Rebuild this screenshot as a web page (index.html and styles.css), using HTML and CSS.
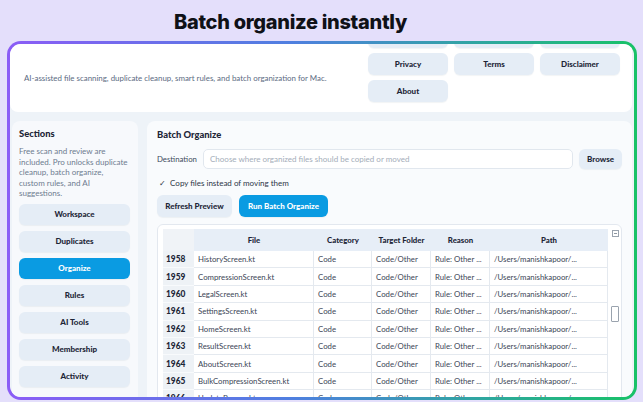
FILE: index.html
```html
<!DOCTYPE html>
<html lang="en">
<head>
    <meta charset="UTF-8">
    <meta name="viewport" content="width=device-width, initial-scale=1.0">
    <title>Batch organize instantly</title>
    <link rel="stylesheet" href="styles.css">
</head>
<body>
    <h1 class="headline">Batch organize instantly</h1>

    <div class="frame">
        <header class="app-header">
            <p class="tagline">AI-assisted file scanning, duplicate cleanup, smart rules, and batch organization for Mac.</p>
            <nav class="links">
                <button class="soft-btn">Settings</button>
                <button class="soft-btn">Support</button>
                <button class="soft-btn">Rate App</button>
                <button class="soft-btn">Privacy</button>
                <button class="soft-btn">Terms</button>
                <button class="soft-btn">Disclaimer</button>
                <button class="soft-btn">About</button>
            </nav>
        </header>

        <div class="workspace">
            <aside class="sidebar">
                <h2 class="card-title">Sections</h2>
                <p class="sidebar-note">Free scan and review are included. Pro unlocks duplicate cleanup, batch organize, custom rules, and AI suggestions.</p>
                <div class="nav-list">
                    <button class="soft-btn nav-btn">Workspace</button>
                    <button class="soft-btn nav-btn">Duplicates</button>
                    <button class="soft-btn nav-btn active">Organize</button>
                    <button class="soft-btn nav-btn">Rules</button>
                    <button class="soft-btn nav-btn">AI Tools</button>
                    <button class="soft-btn nav-btn">Membership</button>
                    <button class="soft-btn nav-btn">Activity</button>
                </div>
            </aside>

            <main class="panel">
                <h2 class="card-title">Batch Organize</h2>

                <div class="dest-row">
                    <label class="dest-label">Destination</label>
                    <div class="dest-input">Choose where organized files should be copied or moved</div>
                    <button class="soft-btn browse-btn">Browse</button>
                </div>

                <p class="check-row">✓&nbsp; Copy files instead of moving them</p>

                <div class="action-row">
                    <button class="soft-btn refresh-btn">Refresh Preview</button>
                    <button class="soft-btn primary-btn">Run Batch Organize</button>
                </div>

                <div class="table-box">
                    <div class="grid-table" id="previewTable">
                        <div class="row head-row">
                            <div class="cell idx"></div>
                            <div class="cell">File</div>
                            <div class="cell">Category</div>
                            <div class="cell">Target Folder</div>
                            <div class="cell">Reason</div>
                            <div class="cell">Path</div>
                        </div>
                    </div>
                    <div class="scroll-track">
                        <span class="corner-box"></span>
                        <span class="thumb"></span>
                    </div>
                </div>
            </main>
        </div>
    </div>

    <script>
        // Fill preview rows
        const files = [
            'HistoryScreen.kt', 'CompressionScreen.kt', 'LegalScreen.kt', 'SettingsScreen.kt',
            'HomeScreen.kt', 'ResultScreen.kt', 'AboutScreen.kt', 'BulkCompressionScreen.kt',
            'UpdateBanner.kt', 'MainActivity.kt'
        ];
        const table = document.getElementById('previewTable');
        files.forEach((name, i) => {
            const row = document.createElement('div');
            row.className = 'row';
            const cells = [1958 + i, name, 'Code', 'Code/Other', 'Rule: Other ...', '/Users/manishkapoor/...'];
            cells.forEach((text, c) => {
                const cell = document.createElement('div');
                cell.className = c === 0 ? 'cell idx' : 'cell';
                cell.textContent = text;
                row.appendChild(cell);
            });
            table.appendChild(row);
        });
    </script>
</body>
</html>
```

FILE: styles.css
```css
* {
    margin: 0;
    padding: 0;
    box-sizing: border-box;
}

body {
    height: 402px;
    overflow: hidden;
    background: #e4dffb;
    font-family: Lato, 'Open Sans', sans-serif;
    color: #1d2637;
}

.headline {
    height: 41px;
    padding: 10px 62px 0 0;
    text-align: center;
    font-family: Inter, sans-serif;
    font-size: 20px;
    font-weight: 800;
    letter-spacing: -0.3px;
    color: #0f1117;
}

.frame {
    margin: 0 6px 0 7px;
    height: 359px;
    border: 3px solid transparent;
    border-radius: 14px;
    background:
        linear-gradient(#eef3f8, #eef3f8) padding-box,
        linear-gradient(90deg, #8b5cf6, #4f7fe0 45%, #2fa6a0 75%, #18c267) border-box;
    overflow: hidden;
}

/* top bar */
.app-header {
    height: 68px;
    margin: 0 2px 0 0;
    padding: 0 12px 0 14px;
    background: #fff;
    border-radius: 0 0 8px 8px;
    display: flex;
    justify-content: space-between;
    align-items: flex-end;
}

.tagline {
    align-self: center;
    font-size: 7.9px;
    color: #5b6b82;
}

.links {
    margin-bottom: 10px;
    display: grid;
    grid-template-columns: repeat(3, 80px);
    grid-auto-rows: 22px;
    gap: 5px 6px;
}

.soft-btn {
    border: none;
    border-radius: 6px;
    background: #e5edf6;
    font-family: Lato, sans-serif;
    font-size: 8px;
    font-weight: 900;
    color: #1d2637;
    box-shadow: 0 1px 1px rgba(40, 60, 90, 0.06);
}

/* body */
.workspace {
    display: flex;
    gap: 9px;
    padding: 9px 4px 0 2px;
}

.card-title {
    font-size: 9.4px;
    font-weight: 900;
    line-height: 12px;
    color: #1d2637;
}

.sidebar {
    width: 126px;
    height: 290px;
    flex-shrink: 0;
    padding: 7px 8px 0 7px;
    background: #f7f9fc;
    border-radius: 8px;
}

.sidebar-note {
    margin-top: 6px;
    font-size: 8px;
    line-height: 10.5px;
    color: #6d7b8f;
}

.nav-list {
    margin-top: 5px;
    display: flex;
    flex-direction: column;
    gap: 6px;
}

.nav-btn {
    height: 21px;
}

.nav-btn.active {
    background: #0a9be2;
    color: #fff;
}

.panel {
    flex: 1;
    height: 290px;
    padding: 8px 10px 0 10px;
    background: #f9fbfd;
    border-radius: 8px;
}

.dest-row {
    margin-top: 8px;
    display: flex;
    align-items: center;
    gap: 6px;
}

.dest-label {
    width: 40px;
    font-size: 7.8px;
    color: #3e4a5c;
}

.dest-input {
    flex: 1;
    height: 20px;
    padding-left: 6px;
    display: flex;
    align-items: center;
    background: #fff;
    border: 1px solid #e1e7ee;
    border-radius: 5px;
    font-size: 8px;
    color: #a4adb9;
}

.browse-btn {
    width: 43px;
    height: 20px;
}

.check-row {
    margin-top: 9px;
    padding-left: 2px;
    font-size: 8px;
    line-height: 10px;
    color: #2b3546;
}

.action-row {
    margin-top: 7px;
    display: flex;
    gap: 7px;
}

.refresh-btn {
    width: 75px;
    height: 22px;
}

.primary-btn {
    width: 89px;
    height: 22px;
    background: #0a9be2;
    color: #fff;
}

/* preview table */
.table-box {
    margin-top: 7px;
    padding: 4px 0 0 5px;
    display: flex;
    background: #fff;
    border: 1px solid #e3e8ef;
    border-radius: 6px;
}

.grid-table {
    width: 445px;
}

.row {
    display: grid;
    grid-template-columns: 31px 120px 58px 59px 59px 118px;
    height: 17.4px;
}

.cell {
    padding-left: 4px;
    display: flex;
    align-items: center;
    border-right: 1px solid #e4e9ef;
    border-bottom: 1px solid #e4e9ef;
    font-size: 7.8px;
    color: #3b4556;
    white-space: nowrap;
    overflow: hidden;
}

.cell.idx {
    padding-left: 3px;
    background: #eef2f6;
    border-right: none;
    border-bottom: 1px solid #f8fafc;
    font-size: 8.4px;
    font-weight: 900;
    color: #1d2637;
}

.head-row {
    height: 22px;
}

.head-row .cell {
    padding-left: 0;
    justify-content: center;
    background: #e7eef7;
    border-right: none;
    border-bottom: none;
    font-weight: 900;
    color: #1d2637;
}

.head-row .cell.idx {
    background: #f0f3f7;
}

.scroll-track {
    width: 13px;
    display: flex;
    flex-direction: column;
    align-items: center;
}

.corner-box {
    width: 7px;
    height: 7px;
    margin: 1px 0 0 2px;
    border: 1px solid #9aa3ae;
    background: linear-gradient(#8d96a1, #8d96a1) center / 3px 1px no-repeat, #fff;
}

.thumb {
    width: 8px;
    height: 16px;
    margin-top: 69px;
    border: 1px solid #9aa3ae;
    border-radius: 1px;
    background: #fff;
}
```
